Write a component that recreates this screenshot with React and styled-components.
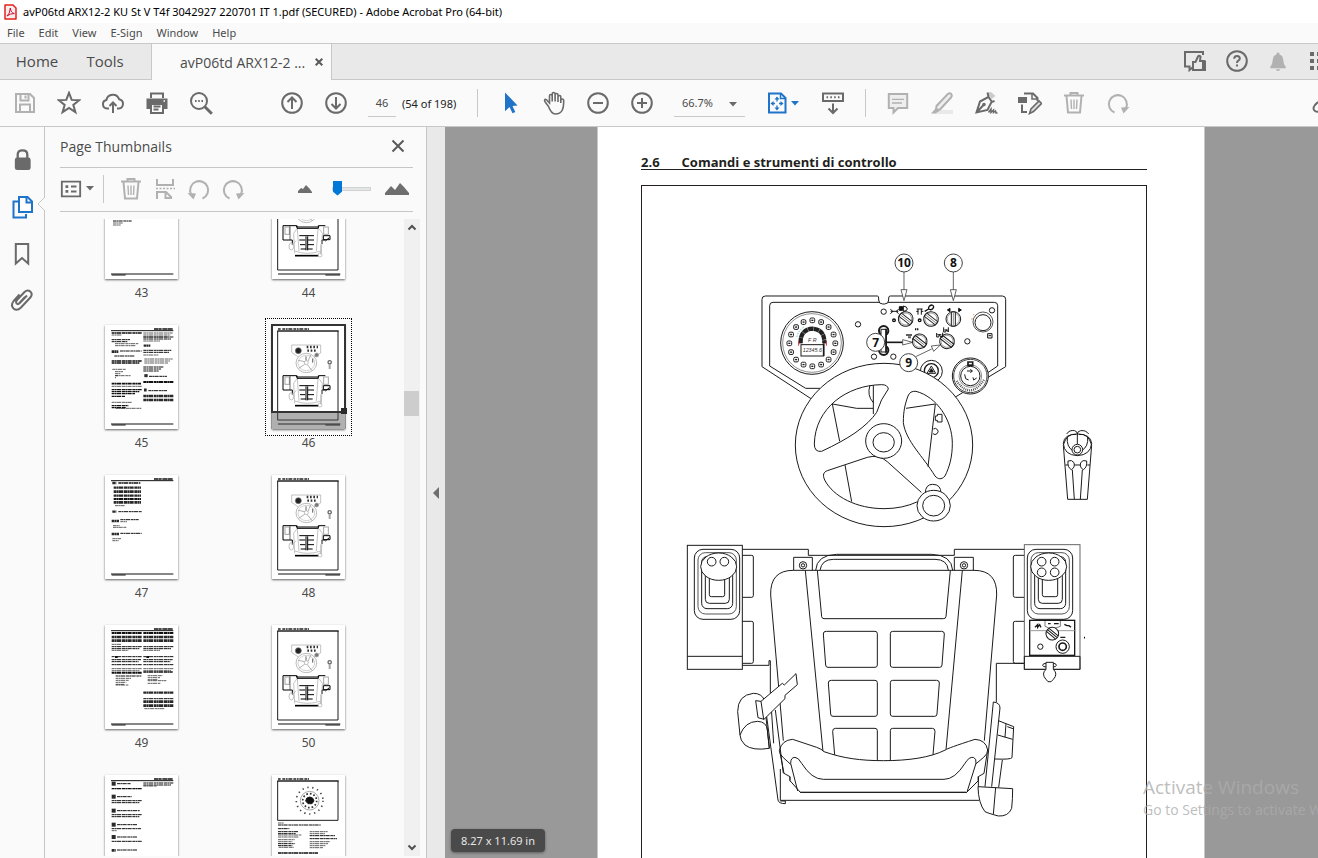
import React from 'react';
import styled, { createGlobalStyle, css } from 'styled-components';

export default function App() {
    return (
        <>
            <GlobalStyle />
            <Window>
                <TitleBar>
                    <PdfIcon />
                    <Title>avP06td ARX12-2 KU St V T4f 3042927 220701 IT 1.pdf (SECURED) - Adobe Acrobat Pro (64-bit)</Title>
                </TitleBar>
                <MenuBar>
                    {menus.map((menu) => (
                        <MenuItem key={menu}>{menu}</MenuItem>
                    ))}
                </MenuBar>
                <TabBar />
                <Toolbar />
                <Body>
                    <NavRail />
                    <ThumbnailPanel />
                    <Splitter aria-label="Collapse panel">
                        <svg width="6" height="12" viewBox="0 0 6 12">
                            <path d="M6 0v12L0 6z" fill="#6e6e6e" />
                        </svg>
                    </Splitter>
                    <Viewer />
                </Body>
            </Window>
        </>
    );
}

const menus = ['File', 'Edit', 'View', 'E-Sign', 'Window', 'Help'];

/* ---------- icons ---------- */

const icons = {
    save: (
        <>
            <path d="M3 3h14l4 4v14H3z" fill="none" />
            <path d="M7.500 3v6.500h8V3M7 21v-7.500h10V21" />
            <path d="M12.500 4.500v3" />
        </>
    ),
    star: <path d="M12 1.800l2.700 7.100 7.500.3-5.900 4.700 2.100 7.300L12 17l-6.400 4.200 2.100-7.300-5.900-4.700 7.500-.3z" />,
    cloud: (
        <>
            <path d="M8 17.500H6a4.300 4.300 0 0 1-.6-8.500 6.600 6.600 0 0 1 12.700-.8 4.700 4.700 0 0 1-.3 9.300H16" />
            <path d="M12 22V11.500M8.500 15l3.500-3.500 3.500 3.500" />
        </>
    ),
    print: (
        <>
            <path d="M6 7V2.500h12V7" />
            <path d="M1.500 7.500h21V18H19v-4H5v4H1.500z" fill="currentColor" stroke="none" />
            <path d="M6 13v9h12v-9M8.500 15.500h7M8.500 18.500h5" />
            <path d="M18.500 10h1.500" stroke="#fff" strokeWidth="1.500" />
        </>
    ),
    search: (
        <>
            <circle cx="10" cy="10" r="8" />
            <path d="M15.800 15.800l7 7" strokeWidth="3" />
            <path d="M6 10h1.600M9.200 10h1.600M12.400 10h1.600" />
        </>
    ),
    up: (
        <>
            <circle cx="12" cy="12" r="9.800" />
            <path d="M12 18V7M7.500 11L12 6.500l4.500 4.500" />
        </>
    ),
    down: (
        <>
            <circle cx="12" cy="12" r="9.800" />
            <path d="M12 6v11M7.500 13l4.500 4.500 4.500-4.500" />
        </>
    ),
    pointer: <path d="M7 1.500v18.800l4.500-4.300 3 6.300 2.800-1.300-2.800-6 5-.5z" fill="currentColor" stroke="none" />,
    hand: (
        <path
            strokeWidth="1.600"
            d="M6.500 15.500L3.200 11c-1.500-2-.2-3.400 1.300-2.200L7.500 12V5c0-2 2.700-2 2.700 0v5.500M10.200 6V3c0-2 2.900-2 2.900 0v7.500M13.100 4c0-2 2.900-2 2.900 0v7M16 6c0-2 2.800-2 2.800 0v6M18.800 9c.5-1.500 2.900-1.500 2.900.5 0 8-1.200 13.500-8.500 13.500-3.500 0-5-3-6.700-7.500"
        />
    ),
    minus: (
        <>
            <circle cx="12" cy="12" r="9.800" />
            <path d="M7 12h10" />
        </>
    ),
    plus: (
        <>
            <circle cx="12" cy="12" r="9.800" />
            <path d="M7 12h10M12 7v10" />
        </>
    ),
    fit: (
        <>
            <path d="M4 2.500h12l4.500 4.500v14.500H4z" />
            <path d="M15.500 3v4.500H20" strokeWidth="1.500" />
            <path d="M12 10.500V8M12 14.500V17M10 12.500H8M14 12.500h2" strokeWidth="1.300" />
            <path d="M12 5.500L9.500 8.500h5zM12 19.500l-2.500-3h5zM5.500 12.500l3-2.500v5zM18.500 12.500l-3-2.500v5z" fill="currentColor" stroke="none" />
        </>
    ),
    keyboard: (
        <>
            <path d="M2 2.500h20v7.500H2z" />
            <path d="M5.500 6.300h1.600M9.300 6.300h1.600M13.100 6.300h1.600M16.900 6.300h1.600" />
            <path d="M12 12.500v9.500M7.500 17.500L12 22l4.500-4.500" />
        </>
    ),
    comment: (
        <>
            <path d="M2.800 3h18.400v14H12l-4.500 4.500V17H2.800z" fill="#eee" />
            <path d="M6 8.300h12M6 12h10" strokeWidth="1.300" />
        </>
    ),
    highlight: (
        <>
            <path d="M10 19h13v4H4z" fill="#e9e9e9" stroke="none" />
            <path d="M6.500 15L18 2.800q2-1.300 3.300.3 1.200 1.700-.3 3.400L10 18.500l-4 .5z" fill="#eee" />
            <path d="M6 17l3.500 3-4 2.500H1z" fill="currentColor" stroke="none" />
        </>
    ),
    sign: (
        <>
            <path d="M13 2l4.500 6 4-3L17 1z" fill="#ccc" stroke="none" />
            <path d="M13.500 1.500l1 4.500L6 10.500 2.500 21.500l11-2.500 4-8 3-1M3 21l6.500-7M14.500 6l3.500 5" />
            <circle cx="10" cy="13.500" r=".8" fill="currentColor" />
            <path d="M14.500 21.500l2.500-3.500v3.500l2.500-2.500v2.500l2-1.500.5 2h1.500" strokeWidth="1.500" />
        </>
    ),
    editPdf: (
        <>
            <path d="M6 2.500h9l4.500 4.500v3M4 13.500v7.500h5" />
            <path d="M14 3v5h5" strokeWidth="1.500" />
            <path d="M0 6h9v6H0z" fill="currentColor" stroke="none" />
            <path d="M11.500 22.500l1.500-4.500 8-8 2.500 2.500-8 8z" fill="#ddd" strokeWidth="1.600" />
        </>
    ),
    trash: (
        <>
            <path d="M2 4.500h20M8.500 4V2h7v2M4.500 5l1.500 16.500h12L19.500 5" />
            <path d="M9 8.500l.5 9.500M12 8.500V18M15 8.500l-.5 9.500" strokeWidth="1.400" />
        </>
    ),
    redo: (
        <>
            <path d="M8.500 21.500A9 9 0 1 1 20 17" />
            <path d="M15 16.500l8.500-.5-6 6.500z" fill="currentColor" stroke="none" />
        </>
    ),
    undo: (
        <>
            <path d="M15.500 21.500A9 9 0 1 0 4 17" />
            <path d="M9 16.500L.5 16l6 6.500z" fill="currentColor" stroke="none" />
        </>
    ),
    link: <path d="M6 11l-3 3q-3 4 0 6 3 2 6-1l6-7" />,
    feedback: (
        <>
            <path d="M20 6V3H2v14.500h4.500V21l3-2.500" />
            <path d="M10 13v8h8.500l3-1.500v-7.500H17l.5-4.500q-1.500-1.500-2.500 0L12.500 13z" />
            <path d="M19 12h4v10h-4z" fill="currentColor" stroke="none" />
        </>
    ),
    help: (
        <>
            <circle cx="12" cy="12" r="9.800" />
            <path d="M9.200 9.800q0-2.800 2.800-2.800t2.800 2.500q0 1.300-1.500 2.200-1.300.8-1.300 2.300M12 15.500v2" />
        </>
    ),
    bell: (
        <path
            d="M10.500 3h3v2q4 1 4.200 6 .3 5 2.800 7.500v1.500h-17V18.500Q6 16 6.300 11q.2-5 4.200-6zM9.500 21h5q-.5 2-2.500 2t-2.500-2z"
            fill="currentColor"
            stroke="none"
        />
    ),
    apps: (
        <path
            d="M0 3h4v4H0zM7 3h4v4H7zM0 10h4v4H0zM7 10h4v4H7zM0 17h4v4H0zM7 17h4v4H7z"
            fill="currentColor"
            stroke="none"
        />
    ),
    lock: (
        <>
            <path d="M7 11V7q0-4.500 5-4.500T17 7v4" strokeWidth="2.400" />
            <rect x="4" y="10" width="16.500" height="13" rx="2.500" fill="currentColor" stroke="none" />
        </>
    ),
    pages: (
        <>
            <path d="M8 6.500H3.500v16h12.500V19" />
            <path d="M9 2h8.500l4.500 4.500V17H9z" fill="#fff" />
            <path d="M16.500 2.500v5H22" />
        </>
    ),
    bookmark: <path d="M5.800 2h12.400v19.500l-6.200-5.500-6.200 5.500z" />,
    clip: <path d="M17 6.500l-7.500 7.800q-1.800 1.700-3-.1-1-1.600.5-3.200L14.500 3q3-2.800 5.800-.5 2.700 2.500.2 5.800l-9.500 10.200q-4 4-7.500 1-3.200-3.200.2-7.500L9.500 5.500M9 14.500l6-6.500" />,
    options: (
        <>
            <path d="M2 4h20v16H2z" />
            <path d="M6 9.300h3M6 14.700h3" strokeWidth="3" />
            <path d="M12 9.300h6M12 14.700h6" />
        </>
    ),
    split: (
        <>
            <path d="M4 2v6h16V2M4 22v-7h9l5 5v2M12.500 15.500V21H18" />
            <path d="M3 11.500h19" strokeDasharray="2 1.500" strokeWidth="1.500" />
        </>
    ),
    close: <path d="M6.500 6.500l11 11M17.500 6.500l-11 11" />,
};

function Icon({ name, size = 24 }) {
    return (
        <svg width={size} height={size} viewBox="0 0 24 24" fill="none" stroke="currentColor" strokeWidth="2" aria-hidden="true">
            {icons[name]}
        </svg>
    );
}

function Caret() {
    return (
        <svg width="8" height="5" viewBox="0 0 8 5" aria-hidden="true">
            <path d="M0 0h8L4 4.500z" fill="currentColor" />
        </svg>
    );
}

function PdfIcon() {
    return (
        <svg width="13" height="16" viewBox="0 0 13 16" aria-hidden="true">
            <path d="M1 1h8l3 3v11H1z" fill="#fbeeee" stroke="#e2231a" strokeWidth="1.500" strokeLinejoin="round" />
            <path d="M3 12q3-2 3.300-8 .7 5 4 5.500-4 0-7.300 2.500" fill="none" stroke="#c8102e" />
        </svg>
    );
}

/* ---------- top bars ---------- */

function TabBar() {
    return (
        <TabBarView>
            <TabButton>Home</TabButton>
            <TabButton>Tools</TabButton>
            <ActiveTab>
                <TabName>avP06td ARX12-2 ...</TabName>
                <CloseTab aria-label="Close tab">
                    <svg width="8" height="8" viewBox="0 0 8 8" stroke="#5a5a5a" strokeWidth="2">
                        <path d="M.7.700l6.600 6.600M7.300.700L.700 7.300" />
                    </svg>
                </CloseTab>
            </ActiveTab>
            <TabActions>
                <IconButton $width={42} aria-label="Feedback"><Icon name="feedback" /></IconButton>
                <IconButton $width={42} aria-label="Help"><Icon name="help" /></IconButton>
                <IconButton $width={40} $muted aria-label="Notifications"><Icon name="bell" size={22} /></IconButton>
                <AppsButton aria-label="Apps"><Icon name="apps" /></AppsButton>
            </TabActions>
        </TabBarView>
    );
}

function Tools({ names, muted }) {
    return names.map((name) => (
        <IconButton key={name} $muted={muted} aria-label={name}>
            <Icon name={name} />
        </IconButton>
    ));
}

function Toolbar() {
    return (
        <ToolbarView>
            <Tools names={['save']} muted />
            <Tools names={['star', 'cloud', 'print', 'search']} />
            <Spacer $size={47} />
            <Tools names={['up', 'down']} />
            <Spacer $size={10} />
            <PageInput aria-label="Page number" defaultValue="46" />
            <PageCount>(54 of 198)</PageCount>
            <Divider $height={28} />
            <Spacer $size={10} />
            <IconButton $blue aria-label="Select"><Icon name="pointer" /></IconButton>
            <Tools names={['hand', 'minus', 'plus']} />
            <Spacer $size={10} />
            <ZoomBox>
                <ZoomSelect aria-label="Zoom level" defaultValue="66.7%">
                    <option>66.7%</option>
                    <option>100%</option>
                </ZoomSelect>
                <ZoomCaret><Caret /></ZoomCaret>
            </ZoomBox>
            <Spacer $size={10} />
            <FitButton $blue $width={56} aria-label="Fit page">
                <Icon name="fit" />
                <Caret />
            </FitButton>
            <Tools names={['keyboard']} />
            <Spacer $size={10} />
            <Divider $height={28} />
            <Spacer $size={10} />
            <Tools names={['comment', 'highlight']} muted />
            <Tools names={['sign', 'editPdf']} />
            <Tools names={['trash', 'redo']} muted />
            <Spacer $size={162} />
            <Tools names={['link']} />
        </ToolbarView>
    );
}

/* ---------- left side ---------- */

function NavRail() {
    return (
        <Rail>
            <RailButton aria-label="Security"><Icon name="lock" size={23} /></RailButton>
            <RailButton $blue aria-label="Page thumbnails">
                <Icon name="pages" />
                <Notch width="8" height="16" viewBox="0 0 8 16">
                    <path d="M8 0v1L1 8l7 7v1" fill="#fafafa" stroke="#c6c6c6" />
                </Notch>
            </RailButton>
            <RailButton aria-label="Bookmarks"><Icon name="bookmark" /></RailButton>
            <RailButton aria-label="Attachments"><Icon name="clip" /></RailButton>
        </Rail>
    );
}

function ThumbnailPanel() {
    return (
        <Panel>
            <PanelHeader>
                <PanelTitle>Page Thumbnails</PanelTitle>
                <PanelClose aria-label="Close panel"><Icon name="close" /></PanelClose>
            </PanelHeader>
            <PanelTools>
                <OptionsButton $width={38} aria-label="Options">
                    <Icon name="options" size={22} />
                    <Caret />
                </OptionsButton>
                <Spacer $size={5} />
                <Divider $height={28} />
                <Spacer $size={10} />
                {['trash', 'split', 'undo', 'redo'].map((name) => (
                    <IconButton key={name} $width={34} $muted aria-label={name}><Icon name={name} /></IconButton>
                ))}
                <SizeControl>
                    <svg width="14" height="8" viewBox="0 0 14 8" fill="#6e6e6e">
                        <path d="M0 8V6l3-3 2 1 3-4 3 3 3 4v1z" />
                    </svg>
                    <SizeRange type="range" min="0" max="100" defaultValue="0" aria-label="Thumbnail size" />
                    <svg width="24" height="12" viewBox="0 0 24 12" fill="#6e6e6e">
                        <path d="M0 12v-2l6-7 4 4 5-7 4 4 5 6v2z" />
                    </svg>
                </SizeControl>
            </PanelTools>
            <ListArea>
                <ThumbGrid>
                    {pages.map((page) => (
                        <Thumbnail key={page.number} page={page} />
                    ))}
                </ThumbGrid>
                <ScrollBar>
                    <svg width="16" height="16" viewBox="0 0 16 16" fill="none" stroke="#505050" strokeWidth="2">
                        <path d="M4.500 10.500L8 7l3.500 3.500" />
                    </svg>
                    <ScrollTrack>
                        <ScrollThumb />
                    </ScrollTrack>
                    <svg width="16" height="16" viewBox="0 0 16 16" fill="none" stroke="#505050" strokeWidth="2">
                        <path d="M4.500 5.500L8 9l3.500-3.500" />
                    </svg>
                </ScrollBar>
            </ListArea>
        </Panel>
    );
}

// text blocks: [x, y, width, lines, weight]
const pages = [
    { number: 43, text: [[19, 118, 62, 1, 2], [24, 138, 56, 1, 3], [24, 144, 30, 2, 2]] },
    { number: 44, diagram: true },
    {
        number: 45,
        text: [
            [20, 24, 90, 1, 4], [20, 30, 30, 1, 2], [20, 44, 55, 2, 3], [30, 56, 70, 2, 2], [20, 80, 20, 1, 8], [45, 78, 65, 1, 3],
            [28, 93, 60, 1, 3], [20, 108, 90, 2, 4], [22, 133, 40, 1, 2], [30, 140, 24, 4, 2], [30, 152, 48, 1, 2], [20, 176, 88, 1, 5],
            [20, 184, 90, 1, 2], [20, 194, 90, 2, 4], [20, 206, 70, 1, 4], [20, 214, 40, 1, 4], [20, 232, 60, 1, 2], [20, 242, 50, 2, 4],
            [32, 250, 78, 1, 2], [115, 24, 88, 3, 2], [115, 36, 90, 2, 3], [115, 48, 50, 1, 2], [116, 62, 20, 1, 7], [115, 76, 84, 2, 3],
            [115, 90, 45, 1, 2], [118, 102, 85, 3, 2], [115, 126, 60, 3, 3], [118, 152, 10, 1, 9], [132, 154, 54, 1, 3],
            [115, 171, 90, 1, 6], [117, 195, 8, 1, 9], [130, 197, 56, 1, 3], [115, 213, 90, 1, 8], [115, 225, 90, 1, 8],
        ],
    },
    { number: 46, diagram: true, selected: true },
    {
        number: 47,
        text: [
            [22, 24, 12, 1, 7], [40, 24, 66, 1, 5], [26, 38, 82, 1, 7], [26, 50, 82, 1, 8], [26, 62, 82, 1, 7], [26, 72, 82, 1, 6],
            [26, 82, 82, 1, 8], [30, 92, 30, 1, 2], [22, 110, 12, 1, 7], [40, 110, 70, 1, 3], [20, 138, 22, 1, 8], [46, 134, 55, 1, 3],
            [46, 140, 20, 1, 2], [24, 152, 20, 1, 2], [24, 157, 40, 1, 2], [20, 177, 22, 1, 8], [46, 175, 64, 1, 3], [22, 191, 26, 2, 2],
        ],
    },
    { number: 48, diagram: true },
    {
        number: 49,
        text: [
            [20, 24, 90, 1, 6], [20, 36, 90, 1, 7], [20, 47, 90, 1, 8], [20, 58, 28, 1, 2], [20, 65, 90, 2, 3], [20, 76, 50, 1, 2],
            [20, 95, 90, 1, 3], [30, 96, 8, 1, 6], [20, 104, 88, 2, 3], [20, 119, 90, 1, 3], [20, 131, 90, 2, 2], [20, 143, 90, 1, 6],
            [32, 153, 78, 1, 3], [32, 160, 46, 4, 2], [32, 180, 38, 1, 2],
            [115, 24, 90, 1, 6], [115, 36, 90, 1, 7], [115, 47, 90, 1, 8], [115, 65, 90, 2, 3], [115, 76, 50, 1, 2],
            [115, 95, 90, 1, 3], [124, 96, 8, 1, 6], [115, 104, 88, 2, 3], [115, 119, 90, 1, 3], [115, 131, 90, 2, 2], [115, 141, 88, 1, 5],
            [128, 152, 44, 3, 2], [128, 167, 56, 1, 2], [128, 175, 38, 1, 2], [115, 203, 90, 1, 7], [115, 221, 90, 1, 3],
            [115, 230, 90, 1, 8], [115, 242, 90, 1, 8], [118, 251, 60, 1, 2],
        ],
    },
    { number: 50, diagram: true },
    {
        number: 51,
        text: [
            [20, 26, 12, 1, 12], [36, 26, 42, 1, 3], [20, 41, 90, 1, 4], [20, 65, 12, 1, 12], [36, 65, 44, 1, 3], [20, 77, 90, 2, 3],
            [20, 107, 12, 1, 12], [36, 107, 68, 1, 3], [20, 119, 90, 2, 3], [20, 149, 12, 1, 12], [36, 149, 60, 1, 3], [20, 161, 88, 1, 3],
            [20, 167, 16, 1, 2], [20, 186, 12, 1, 12], [36, 186, 62, 1, 3], [20, 199, 90, 1, 3], [20, 226, 12, 1, 8], [36, 225, 60, 1, 3],
            [115, 24, 90, 2, 3], [115, 33, 40, 1, 2],
        ],
    },
    {
        number: 52,
        gauge: true,
        text: [
            [18, 144, 18, 1, 2], [18, 150, 128, 1, 3], [18, 161, 34, 1, 3], [18, 170, 60, 2, 3], [18, 180, 70, 2, 2],
            [18, 194, 50, 2, 2], [18, 206, 50, 2, 3], [20, 217, 45, 1, 2], [113, 170, 54, 2, 2], [113, 182, 76, 1, 3], [113, 191, 82, 1, 3],
            [113, 200, 62, 4, 2], [18, 234, 120, 1, 4],
        ],
    },
];

function Thumbnail({ page }) {
    return (
        <ThumbItem>
            <ThumbPage $selected={page.selected} aria-label={'Page ' + page.number}>
                <svg width="73" height="104" viewBox="0 0 219 312">
                    {page.diagram || page.gauge ? <MiniFigureHead /> : <MiniHeader />}
                    {page.diagram && <MiniDiagram />}
                    {page.gauge && <MiniGauge />}
                    {page.text && <MiniText blocks={page.text} />}
                    <path d="M18 297h187" stroke="#111" strokeWidth="3" />
                    <path d={page.diagram ? 'M160 300h44' : 'M20 300h42'} stroke="#111" strokeWidth="3" />
                </svg>
                {page.selected && <ViewMarker />}
            </ThumbPage>
            <ThumbLabel>{page.number}</ThumbLabel>
        </ThumbItem>
    );
}

function MiniHeader() {
    return (
        <g stroke="#111" fill="none">
            <path d="M147 12h57" strokeWidth="5" strokeDasharray="13 1 9 2 15 1" />
            <path d="M18 17h187" strokeWidth="3" />
        </g>
    );
}

function MiniFigureHead() {
    return (
        <g stroke="#222" fill="none">
            <path d="M18 12h8M31 12h80" strokeWidth="4" strokeDasharray="9 2 5 2 12 3" />
            <path d="M16 18h184" strokeWidth="5" />
        </g>
    );
}

function MiniText({ blocks }) {
    return blocks.map(([x, y, w, lines, weight], i) => (
        <g key={i} stroke={weight > 6 ? '#2a2a2a' : '#111'} strokeWidth={weight} fill="none">
            {Array.from({ length: lines }, (_, n) => (
                <path key={n} d={`M${x} ${y + n * 6}h${w - n * 7}`} strokeDasharray={weight > 8 ? 'none' : '9 1 5 1 13 2'} />
            ))}
        </g>
    ));
}

function MiniDiagram() {
    return (
        <g fill="none" stroke="#a5a5a5" strokeWidth="2">
            <path d="M17 18v267h181V18" stroke="#1d1d1d" strokeWidth="3" />
            <path d="M59 60h87v24l-20 12M59 60v22l20 14" />
            <circle cx="79" cy="77" r="9" fill="#222" stroke="#777" />
            <path d="M104 66h34M106 77h26" stroke="#333" strokeWidth="7" strokeDasharray="5 5" />
            <circle cx="134" cy="90" r="6" fill="#777" />
            <ellipse cx="103" cy="114" rx="31" ry="29" stroke="#999" />
            <ellipse cx="103" cy="114" rx="25" ry="23" stroke="#bbb" />
            <circle cx="103" cy="113" r="6" />
            <path d="M98 110l-19-4M108 109l8-19M106 119l14 18M98 118l-18 12" stroke="#888" />
            <path d="M102 94v12M122 101v12" stroke="#111" />
            <circle cx="173" cy="112" r="5" strokeWidth="4" stroke="#666" />
            <path d="M173 118v14" strokeWidth="6" />
            <path d="M33 195v-43h41v4h66v-4h20M33 195h28v14M75 152v8h64v-8M160 195h-10v12" stroke="#000" strokeWidth="3" />
            <rect x="39" y="156" width="13" height="22" strokeWidth="3" />
            <rect x="155" y="156" width="14" height="22" strokeWidth="3" />
            <path d="M54 152v43" stroke="#222" />
            <path d="M68 235l-3-60 9-13M148 235l3-60-9-13M76 162l5 66M138 162l-5 66" />
            <path d="M82 182h44M82 195h18M108 195h18M84 209h16M108 209h18M86 222h16M106 222h16M102 184v42M107 184v42" stroke="#000" strokeWidth="3" />
            <path d="M154 182h20v12h-20zM160 198l12-10" stroke="#000" strokeWidth="3" />
            <path d="M69 242h70" stroke="#000" strokeWidth="5" />
            <ellipse cx="58" cy="214" rx="7" ry="11" />
            <path d="M60 210l12-13M68 228q38 14 78 0M146 208v30" />
            <circle cx="144" cy="240" r="6" />
        </g>
    );
}

function MiniGauge() {
    return (
        <g fill="none" stroke="#1d1d1d" strokeWidth="3">
            <path d="M17 18v118h181V18" />
            <circle cx="113" cy="77" r="28" stroke="#aaa" />
            <circle cx="113" cy="77" r="21" stroke="#333" strokeWidth="5" strokeDasharray="5 6" />
            <circle cx="113" cy="77" r="40" stroke="#444" strokeWidth="5" strokeDasharray="4 11" />
            <path d="M101 78q1-12 12-12t13 12l-6 8h-12z" fill="#111" />
        </g>
    );
}

/* ---------- document ---------- */

function Viewer() {
    return (
        <ViewerView>
            <Sheet>
                <Heading>
                    <span>2.6</span>
                    <span>Comandi e strumenti di controllo</span>
                </Heading>
                <Figure>
                    <svg width="504" height="700" viewBox="642 186 504 700" fill="none" stroke="#1a1a1a" strokeWidth="3">
                        <Dashboard />
                        <Seat />
                        <Lever />
                    </svg>
                </Figure>
            </Sheet>
            <SizeBadge>8.27 x 11.69 in</SizeBadge>
            <Watermark>
                <WatermarkTitle>Activate Windows</WatermarkTitle>
                <WatermarkText>Go to Settings to activate Windows.</WatermarkText>
            </Watermark>
        </ViewerView>
    );
}

function Knob({ x, y, turn = 38 }) {
    return (
        <g transform={`translate(${x} ${y}) rotate(${turn})`}>
            <circle r="22" fill="#fff" />
            <circle r="18" stroke="#777" strokeWidth="2" />
            <path d="M-21 -6h42v12h-42z" fill="#fff" />
            <path d="M-18 0h36" stroke="#555" strokeWidth="2" />
        </g>
    );
}

function Callout({ x, y, children }) {
    return (
        <g>
            <circle cx={x} cy={y} r="27" fill="#fff" stroke="#444" />
            <CalloutText x={x} y={y + 13}>{children}</CalloutText>
        </g>
    );
}

function Dashboard() {
    const marks = Array.from({ length: 16 }, (_, i) => (i * Math.PI) / 8);
    return (
        <g transform="translate(750 240) scale(.33333)">
            <path d="M183 476L36 380V178q0-10 10-10h336q4 0 4 6v6q0 12 12 12h6q12 0 12-12v-6q0-6 5-6h336q10 0 10 10v202L608 476" />
            <path d="M210 445h-43L59 378V197q0-10 10-10h319M414 187h319q10 0 10 10v181l-50 34" />

            <circle cx="186" cy="309" r="94" />
            <circle cx="186" cy="309" r="88" stroke="#555" strokeWidth="2" />
            {marks.map((a, i) => (
                <g key={i}>
                    <rect x={180 + 69 * Math.sin(a)} y={303 - 69 * Math.cos(a)} width="14" height="14" rx="4" strokeWidth="3" />
                    <path d={`M${184 + 69 * Math.sin(a)} ${310 - 69 * Math.cos(a)}h6`} strokeWidth="4" />
                </g>
            ))}
            <path d="M152 310q-2-41 35-44 38 3 36 44" strokeWidth="13" stroke="#222" strokeDasharray="16 1" />
            <path d="M141 290a48 46 0 0 1 22-30" stroke="#2aa0b8" strokeDasharray="3 5" />
            <path d="M146 303v14M229 303v14" stroke="#c33" />
            <rect x="153" y="314" width="68" height="34" fill="#fff" />
            <path d="M221 310v38" strokeWidth="5" />
            <DisplayText x="187" y="337">12345.6</DisplayText>
            <DisplayText x="187" y="306">F R</DisplayText>

            {[[401, 215], [324, 253], [372, 350], [430, 350], [652, 304], [726, 211]].map(([x, y]) => (
                <circle key={x} cx={x} cy={y} r="8" />
            ))}
            <circle cx="401" cy="272" r="14" strokeWidth="6" />
            <circle cx="401" cy="331" r="14" strokeWidth="6" />
            <path d="M393 268h16v68h-16z" fill="#fff" />
            <path d="M408 266v72" strokeWidth="5" />

            <Knob x={467} y={237} />
            <Knob x={543} y={237} />
            <Knob x={610} y={237} turn={90} />
            <Knob x={509} y={304} />
            <Knob x={591} y={304} />
            <g stroke="#111" strokeWidth="3">
                <path d="M421 208l8 6-8 7M446 208l-8 6 8 7M429 214h9M422 214h5M440 214h5" />
                <path d="M448 200h10v11h-10z" fill="#111" />
                <path d="M460 198q12 2 12 9 0 6-12 7z" />
                <circle cx="432" cy="241" r="4" strokeWidth="4" />
                <circle cx="509" cy="241" r="4" strokeWidth="4" />
                <path d="M500 207h18M504 207v17M514 207v17M499 214h6M514 214h6" />
                <path d="M524 214l12-7M536 207q-2-10 10-12 8 3 3 10t-13 2" strokeWidth="4" />
                <path d="M592 210l8-5v10zM634 210l-8-5v10z" fill="#111" />
                <path d="M469 285h17M495 268h12M475 292h8" strokeWidth="6" strokeDasharray="4 2" />
                <path d="M560 279v12h6l2-7 5 7h5v-13M581 262v14h6l2-7 6 7V262M562 284h12M583 270h10" />
                <path d="M713 281h13v13h-13zM716 287h7" />
            </g>
            <circle cx="699" cy="246" r="30" stroke="#555" />
            <circle cx="699" cy="248" r="24" />
            <path d="M672 222q-8 13-7 26" stroke="#d8802b" strokeDasharray="4 10" />

            <circle cx="544" cy="394" r="33" />
            <circle cx="544" cy="392" r="21" strokeWidth="4" />
            <path d="M544 378l13 22h-26z" />
            <path d="M544 386l6 10h-12z" fill="#111" />

            <circle cx="661" cy="408" r="54" fill="#fff" />
            <circle cx="661" cy="408" r="50" stroke="#444" />
            <path d="M620 423q41 58 82-4" stroke="#555" strokeWidth="7" strokeDasharray="3 3" />
            <circle cx="661" cy="408" r="34" stroke="#555" strokeWidth="2" />
            <circle cx="661" cy="408" r="29" />
            <path d="M654 366h14v10h-14z" strokeWidth="5" />
            <path d="M651 393h16l-6-5M667 393l-6 5M644 403l3 13 9 4M671 420l-2-8M671 420l9-6" strokeWidth="3" />

            <path d="M462 96v54M610 96v54M495 351l50-24" strokeWidth="2" />
            <path d="M404 307h54" strokeWidth="5" />
            <path d="M453 149h18l-9 33zM601 149h18l-9 33zM458 299v16l30-8zM544 318l7 16 20-19z" fill="#fff" strokeWidth="2" />
            <Callout x={462} y={69}>10</Callout>
            <Callout x={610} y={69}>8</Callout>
            <Callout x={377} y={307}>7</Callout>

            <ellipse cx="402" cy="615" rx="266" ry="245" fill="#fff" />
            <Callout x={476} y={368}>9</Callout>
            <path d="M415 447q-2-13-20-13C290 435 195 505 193 612q0 25 22 22 60-28 100-55 45-32 65-62 12-40 35-70z" />
            <path d="M474 468q6-16 24-14c62 16 109 86 109 156 0 40-8 70-22 98-11 12-21 10-30 0-35-58-88-105-95-160 0-35 5-55 14-80z" />
            <path d="M503 785q-45 21-101 21c-82 0-152-36-178-86-7-16-3-24 8-28l120-40q35-10 61 14l101 91" />
            <path d="M247 492l73 13h50M247 492l22 112M370 436v86M360 436q-10 30 10 52M468 505l88-13-22 188M285 675l20 110" />
            <path d="M556 528h6v-5h14v23h-14v-5h-6zM550 567a9 9 0 1 1-1 14" />
            <ellipse cx="401" cy="603" rx="54" ry="52" fill="#fff" />
            <ellipse cx="401" cy="607" rx="32" ry="29" />
            <path d="M526 760q0-27 22-27 25 0 25 27z" fill="#fff" />
            <ellipse cx="551" cy="797" rx="50" ry="46" fill="#fff" />
            <ellipse cx="551" cy="797" rx="33" ry="31" />
        </g>
    );
}

function Joystick({ x, headX, buttons }) {
    return (
        <g>
            <g transform={`translate(${x} 0)`}>
                <rect x="73" y="58" width="136" height="210" rx="26" />
                <rect x="84" y="68" width="115" height="184" rx="22" stroke="#555" />
                <rect x="95" y="80" width="93" height="156" rx="16" />
                <rect x="106" y="90" width="72" height="130" rx="12" />
                <path d="M118 140v54q0 6 6 6h34q6 0 6-6v-54" />
            </g>
            <ellipse cx={headX} cy="110" rx="54" ry="41" fill="#fff" />
            {buttons.map(([cx, cy]) => (
                <circle key={cx + '-' + cy} cx={cx} cy={cy} r="13" />
            ))}
        </g>
    );
}

function SeatPads() {
    return (
        <>
            <path d="M470 304h145q7 0 7 7v94q0 7-7 7H474q-7 0-7-7l-7-93q0-8 8-8z" />
            <path d="M484 451h131q7 0 7 7v94q0 7-7 7H489q-7 0-7-7l-7-93q0-8 8-8z" />
            <path d="M495 686l-7-82q0-9 8-9h119q7 0 7 7v88" />
        </>
    );
}

function Seat() {
    return (
        <g transform="translate(670 530) scale(.33333)">
            <path d="M217 58h198v18h438V58h210" />
            <path d="M217 76h28q5 0 5 5v116q0 5-5 5h-28M217 274h28q5 0 5 5v116q0 5-5 5h-28M1063 76h-27q-6 0-6 5v116q0 5 6 5h27M1063 274h-27q-6 0-6 5v116q0 5 6 5h27" />
            <path d="M217 406h80v-14h4v98M1063 400h-84v116" />
            <rect x="52" y="46" width="165" height="372" />
            <path d="M52 379h165" />
            <Joystick x={0} headX={146} buttons={[[125, 95], [163, 95]]} />

            <rect x="1063" y="44" width="167" height="374" stroke="#666" />
            <path d="M1063 379h167v39h-167z" />
            <Joystick x={999} headX={1136} buttons={[[1115, 95], [1154, 95], [1115, 127], [1154, 127]]} />
            <rect x="1079" y="271" width="135" height="105" fill="#fff" strokeWidth="4" />
            <path d="M1079 302h135" stroke="#999" />
            <path d="M1125 273v16q20 12 46 0v-16" stroke="#777" />
            <path d="M1095 292l8-8v8l6-8 4 8M1183 283l8 4h6l6 5M1134 281h8M1152 281h14M1171 322h15" strokeWidth="4" />
            <g transform="translate(1147 311) rotate(40)">
                <circle r="19" fill="#fff" />
                <path d="M-18-6h36M-19 0h38M-18 6h36" />
            </g>
            <circle cx="1111" cy="350" r="8" />
            <circle cx="1178" cy="350" r="20" />
            <circle cx="1178" cy="350" r="11" strokeWidth="5" />
            <path d="M1128 400q-10 0-10 6 0 4 10 5M1150 400q9 0 9 6 0 4-9 5" />
            <path d="M1128 397h22v21q15 14 0 30-6 11-16 7l-6-7q-15-16 0-30z" fill="#fff" />
            <path d="M1242 323h3" strokeWidth="5" stroke="#000" />

            <path d="M437 121q3-46 63-48h285q60 2 63 48M450 121q5-33 40-33h305q37 0 40 33" />
            <path d="M371 121V82h56v39M853 121V82h57v39" />
            {[399, 882].map((x) => (
                <g key={x}>
                    <circle cx={x} cy="106" r="11" />
                    <circle cx={x} cy="106" r="5" />
                </g>
            ))}
            <path d="M340 632L302 195q-2-74 68-74h542q70 0 68 74l-37 437" />
            <path d="M406 121l53 544M877 121l-49 539M442 121l13 139q1 6 7 6h358q7 0 8-6l13-139" />
            <SeatPads />
            <g transform="translate(1283 0) scale(-1 1)">
                <SeatPads />
            </g>

            <path d="M342 730l-13-68M942 730l11-70M342 730l18 10v12l31 35h499l35-35v-12l17-10M331 717v94h596M925 740v30" />
            <path d="M362 703q-10-9-22-20-12-10-12-22 8-31 40-33l72 24q15 5 22 13c58 20 108 27 179 27 74 0 139-9 185-32q5-5 89-32 33 2 38 32 0 12-12 22l-25 21v80H362z" fill="#fff" stroke="none" />
            <path d="M362 703q-10-9-22-20-12-10-12-22 8-31 40-33l72 24q15 5 22 13c58 20 108 27 179 27 74 0 139-9 185-32q5-5 89-32 33 2 38 32 0 12-12 22l-25 21" />
            <path d="M360 740v12l31 35h499l35-35v-12" />
            <path d="M383 783l-21-83q0-18 13-18 10 0 20 18 30 48 65 48h362q33 0 63-48 12-20 25-18 10 3 8 18l-26 83" />
            <path d="M303 520l8 120M290 560l34 250q2 11 22 11v-8h-15M316 540l24 190" />

            <path d="M283 510q-8-20-33-20-47 5-47 55l7 70q15-40 52-41 28 1 30 26l6 55q-50 8-73-10-15-15-15-30M288 562l10 93" />
            <path d="M257 512l16 2 64-54 6 5 35-34 4 33-37 32v10l-63 62-18-5zM273 514l8 54" fill="#fff" />

            <path d="M970 516q20 2 20 18l-25 236M970 516l-25 254M985 572l46 18-5 93q-3 6-51 4M983 615l45 13M1008 581l-3 41M1012 590l17 6M997 690l-11 82" />
            <path d="M924 770l104 6q0 30-3 59-10 25-40 23-30-8-40-13-20-25-21-75z" fill="#fff" />
            <path d="M977 772l-7 81" />
        </g>
    );
}

function Lever() {
    return (
        <g transform="translate(1040 420) scale(.33333)">
            <path d="M70 75l13 163h59l13-163M76 135h8M142 135h8M103 135h18M97 150l6 88M127 150l-6 88" />
            <path d="M70 70q2-28 42-28 40 0 43 28-3 35-43 37-40-2-42-37z" fill="#fff" />
            <path d="M80 42q8-13 24-10 8 2 8 10 0-8 10-10 16-2 24 10M70 75q10-35 38-32M155 75q-10-35-38-32M82 50q-3 30 16 42M143 50q3 30-18 42M112 42v30" />
            <circle cx="112" cy="89" r="16" fill="#fff" />
            <circle cx="112" cy="89" r="10" />
            <path d="M84 123q12-5 18 5 4 15-8 21-12-7-10-26zM140 123q-12-5-18 5-4 15 8 21 12-7 10-26z" fill="#fff" />
        </g>
    );
}

/* ---------- styles ---------- */

const GlobalStyle = createGlobalStyle`
    * {
        box-sizing: border-box;
    }
    body {
        margin: 0;
        overflow: hidden;
        font-family: 'Noto Sans', 'Open Sans', sans-serif;
        font-size: 11px;
        color: #4b4b4b;
        background: #fafafa;
    }
    button, input, select {
        margin: 0;
        padding: 0;
        border: 0;
        background: none;
        color: inherit;
        font: inherit;
    }
    svg {
        display: block;
        flex-shrink: 0;
    }
`;

const Window = styled.div`
    height: 100vh;
    display: flex;
    flex-direction: column;
    overflow: hidden;
`;

const TitleBar = styled.header`
    height: 23px;
    display: flex;
    align-items: center;
    gap: 6px;
    padding-left: 4px;
    flex-shrink: 0;
    background: #fff;
    color: #000;
    white-space: nowrap;
`;

const Title = styled.div`
    line-height: 22px;
`;

const MenuBar = styled.nav`
    height: 20px;
    display: flex;
    align-items: center;
    gap: 14px;
    padding-left: 7px;
    flex-shrink: 0;
`;

const MenuItem = styled.button`
    line-height: 20px;
`;

const TabBarView = styled.div`
    height: 37px;
    display: flex;
    flex-shrink: 0;
    background: #e9e9e9;
    border-top: 1px solid #c8c8c8;
    box-shadow: inset 0 -1px #c8c8c8;
`;

const TabButton = styled.button`
    width: 72px;
    padding-bottom: 2px;
    font-family: 'Open Sans', sans-serif;
    font-size: 15px;

    &:first-child {
        width: 74px;
    }
    & + & {
        width: 62px;
        margin-right: 15px;
    }
`;

const ActiveTab = styled.div`
    width: 181px;
    display: flex;
    align-items: center;
    justify-content: space-between;
    padding-left: 28px;
    padding-right: 8px;
    background: #fafafa;
    border: 1px solid #c8c8c8;
    border-top: 0;
    border-bottom: 0;
`;

const TabName = styled.span`
    font-family: 'Open Sans', sans-serif;
    font-size: 14px;
    white-space: nowrap;
`;

const CloseTab = styled.button`
    display: flex;
`;

const TabActions = styled.div`
    display: flex;
    margin-left: auto;
    padding-bottom: 2px;
`;

const IconButton = styled.button`
    width: ${(props) => props.$width || 44}px;
    display: flex;
    align-items: center;
    justify-content: center;
    flex-shrink: 0;
    color: ${(props) => (props.$blue ? '#1f73c8' : props.$muted ? '#b1b1b1' : '#6a6a6a')};
`;

const AppsButton = styled.button`
    width: 20px;
    padding-left: 12px;
    display: flex;
    align-items: center;
    overflow: hidden;
    color: #6a6a6a;
`;

const ToolbarView = styled.div`
    height: 47px;
    display: flex;
    align-items: center;
    flex-shrink: 0;
    padding-left: 3px;
    overflow: hidden;
    border-bottom: 1px solid #c8c8c8;
`;

const Spacer = styled.div`
    width: ${(props) => props.$size}px;
    flex-shrink: 0;
`;

const Divider = styled.div`
    width: 1px;
    height: ${(props) => props.$height}px;
    flex-shrink: 0;
    background: #c8c8c8;
`;

const underline = css`
    height: 27px;
    border-bottom: 1px solid #c8c8c8;
`;

const PageInput = styled.input`
    ${underline}
    width: 28px;
    flex-shrink: 0;
    text-align: center;
`;

const PageCount = styled.span`
    width: 75px;
    margin-left: 6px;
    flex-shrink: 0;
    white-space: nowrap;
    color: #222;
`;

const ZoomBox = styled.div`
    ${underline}
    position: relative;
    width: 71px;
    display: flex;
    flex-shrink: 0;
`;

const ZoomSelect = styled.select`
    width: 100%;
    padding-left: 8px;
    appearance: none;
`;

const ZoomCaret = styled.span`
    position: absolute;
    top: 12px;
    right: 8px;
    color: #6a6a6a;
    pointer-events: none;
`;

const FitButton = styled(IconButton)`
    justify-content: flex-start;
    padding-left: 10px;
    gap: 2px;
`;

const OptionsButton = styled(IconButton)`
    justify-content: flex-start;
    gap: 4px;
`;

const Body = styled.div`
    flex: 1;
    display: flex;
    min-height: 0;
`;

const Rail = styled.nav`
    width: 45px;
    flex-shrink: 0;
    padding-top: 9px;
    border-right: 1px solid #c6c6c6;
`;

const RailButton = styled.button`
    position: relative;
    width: 44px;
    height: 47px;
    display: flex;
    align-items: center;
    justify-content: center;
    color: ${(props) => (props.$blue ? '#1f73c8' : '#6a6a6a')};
`;

const Notch = styled.svg`
    position: absolute;
    right: -1px;
    top: 13px;
`;

const Panel = styled.aside`
    width: 382px;
    flex-shrink: 0;
    display: flex;
    flex-direction: column;
    padding: 0 6px 0 15px;
    border-right: 1px solid #c6c6c6;
`;

const PanelHeader = styled.div`
    height: 41px;
    display: flex;
    align-items: center;
    justify-content: space-between;
    flex-shrink: 0;
    margin-right: 7px;
    padding: 0 3px 2px 0;
    border-bottom: 1px solid #c6c6c6;
`;

const PanelTitle = styled.h2`
    margin: 0;
    font-family: 'Open Sans', sans-serif;
    font-size: 14px;
    font-weight: 400;
`;

const PanelClose = styled.button`
    display: flex;
    color: #5a5a5a;
`;

const PanelTools = styled.div`
    height: 44px;
    display: flex;
    align-items: center;
    flex-shrink: 0;
    margin-right: 7px;
    padding-bottom: 2px;
    border-bottom: 1px solid #c6c6c6;
`;

const SizeControl = styled.div`
    display: flex;
    align-items: center;
    margin-left: auto;
    padding-right: 4px;
`;

const SizeRange = styled.input`
    width: 39px;
    height: 16px;
    margin: 0 14px 0 20px;
    appearance: none;

    &::-webkit-slider-runnable-track {
        height: 4px;
        background: #e3e6e6;
        border: 1px solid #d2d2d2;
    }
    &::-webkit-slider-thumb {
        appearance: none;
        width: 9px;
        height: 15px;
        margin-top: -7px;
        background: #0078d7;
        clip-path: polygon(0 0, 100% 0, 100% 75%, 50% 100%, 0 75%);
    }
`;

const ListArea = styled.div`
    flex: 1;
    display: flex;
    min-height: 0;
    margin: 7px 0 2px;
    overflow: hidden;
`;

const ThumbGrid = styled.div`
    flex: 1;
    display: grid;
    grid-template-columns: 73px 73px;
    grid-auto-rows: 150px;
    column-gap: 94px;
    align-content: start;
    margin-top: -44px;
    padding-left: 45px;
`;

const ThumbItem = styled.div`
    display: flex;
    flex-direction: column;
    align-items: center;
`;

const ThumbPage = styled.button`
    position: relative;
    display: block;
    height: 104px;
    background: #fff;
    box-shadow: 0 1px 2px rgba(0, 0, 0, 0.6);
    outline: ${(props) => (props.$selected ? '1px dotted #000' : 'none')};
    outline-offset: 6px;
`;

const ViewMarker = styled.span`
    position: absolute;
    inset: -1px -1px 16px;
    border: 2px solid #333;
    box-shadow: 0 16px rgba(80, 80, 80, 0.45);

    &::after {
        content: '';
        position: absolute;
        right: -3px;
        bottom: -3px;
        width: 6px;
        height: 6px;
        background: #2b2b2b;
    }
`;

const ThumbLabel = styled.span`
    margin-top: 6px;
    font-size: 12px;
    line-height: 16px;
`;

const ScrollBar = styled.div`
    width: 16px;
    display: flex;
    flex-direction: column;
    background: #f0f0f0;
`;

const ScrollTrack = styled.div`
    flex: 1;
    padding-top: 156px;
`;

const ScrollThumb = styled.div`
    width: 15px;
    height: 25px;
    background: #cdcdcd;
`;

const Splitter = styled.button`
    width: 18px;
    flex-shrink: 0;
    display: flex;
    align-items: center;
    justify-content: center;
    background: #e9e9e9;
`;

const ViewerView = styled.main`
    position: relative;
    flex: 1;
    min-width: 0;
    overflow: hidden;
    background: #999;
`;

const Sheet = styled.article`
    width: 608px;
    min-height: 859px;
    margin-left: 152px;
    padding: 28px 57px 0 43px;
    background: #fff;
    border: 1px solid #c8c8c8;
    border-top: 0;
`;

const Heading = styled.h1`
    display: flex;
    gap: 22px;
    margin: 0 0 15px;
    font-family: 'Open Sans', sans-serif;
    font-size: 13px;
    font-weight: 700;
    line-height: 14px;
    white-space: nowrap;
    color: #231f20;
    border-bottom: 1px solid #231f20;
`;

const Figure = styled.figure`
    margin: 0;
    border: 1px solid #231f20;
`;

const CalloutText = styled.text`
    fill: #111;
    stroke: none;
    font-family: 'Open Sans', sans-serif;
    font-size: 36px;
    font-weight: 700;
    text-anchor: middle;
`;

const DisplayText = styled.text`
    fill: #333;
    stroke: none;
    font-family: 'Liberation Sans', sans-serif;
    font-size: 16px;
    font-style: italic;
    text-anchor: middle;
`;

const SizeBadge = styled.div`
    position: absolute;
    left: 6px;
    bottom: 6px;
    padding: 0 10px;
    border-radius: 4px;
    line-height: 23px;
    color: #e6e6e6;
    background: #4a4a4a;
    box-shadow: 0 1px 3px rgba(0, 0, 0, 0.4);
`;

const Watermark = styled.div`
    position: absolute;
    right: 0;
    bottom: 38px;
    width: 175px;
    overflow: hidden;
    white-space: nowrap;
    font-family: 'Open Sans', sans-serif;
    color: rgba(172, 172, 172, 0.8);
`;

const WatermarkTitle = styled.div`
    font-size: 19px;
    line-height: 26px;
`;

const WatermarkText = styled.div`
    font-size: 14px;
    line-height: 20px;
`;
